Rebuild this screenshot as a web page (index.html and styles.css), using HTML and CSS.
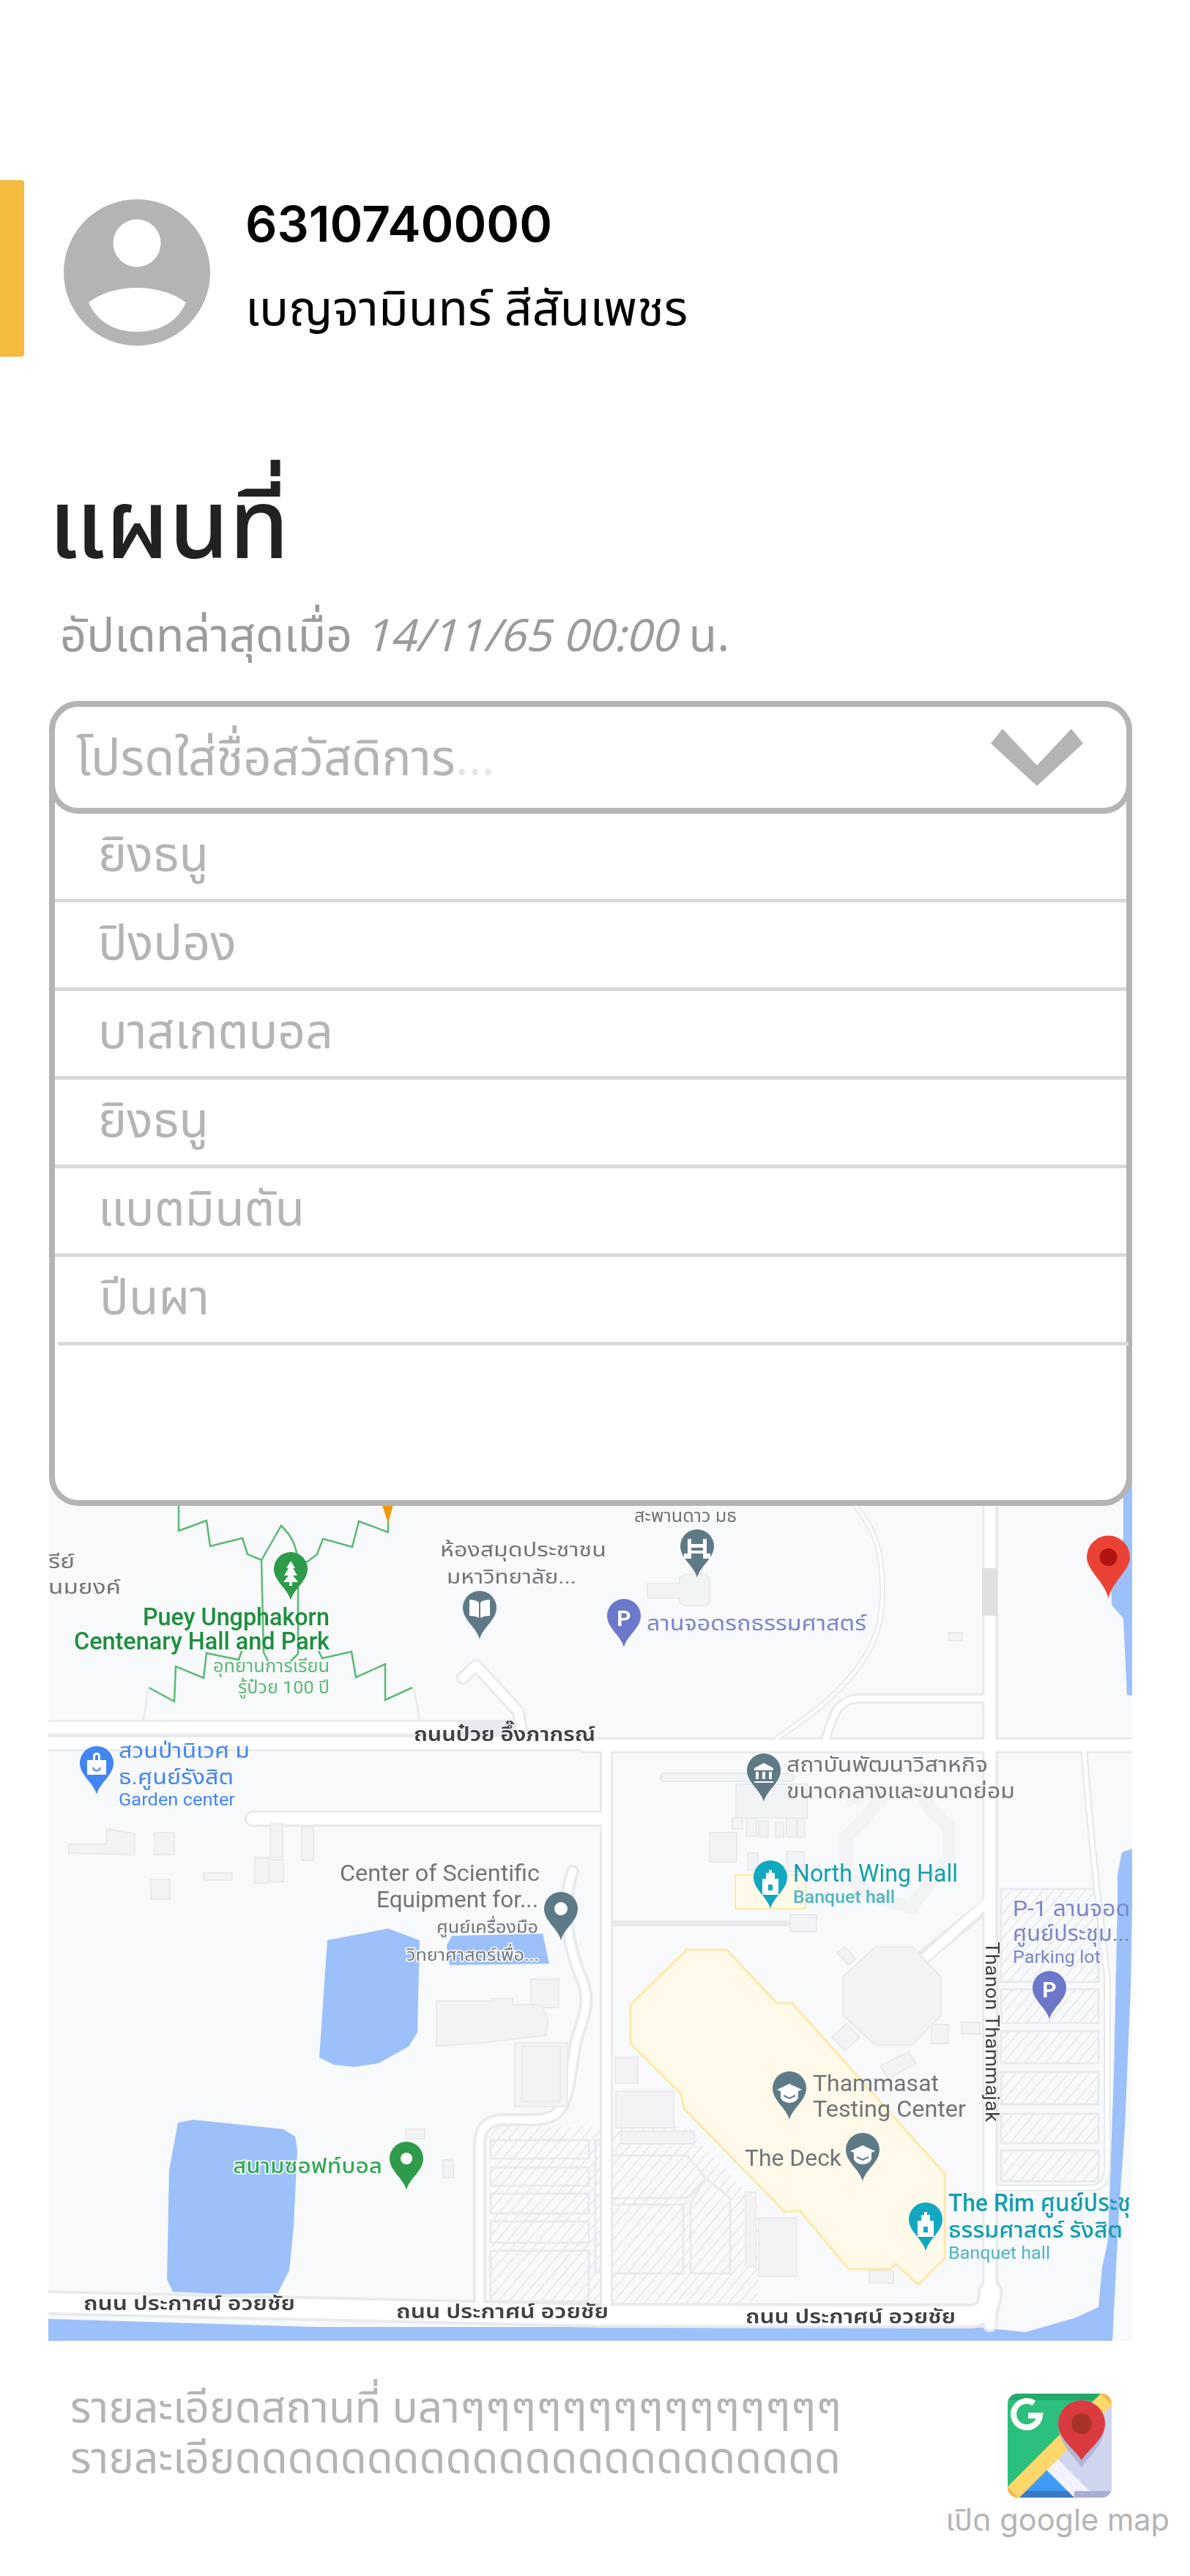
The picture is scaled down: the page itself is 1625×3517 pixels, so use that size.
FILE: index.html
```html
<!DOCTYPE html>
<html lang="th">
<head>
<meta charset="utf-8">
<title>แผนที่</title>
<link rel="stylesheet" href="styles.css">
</head>
<body>
<header class="user">
  <div class="user-bar"></div>
  <svg class="avatar" viewBox="0 0 200 200"><circle cx="100" cy="100" r="100" fill="#b4b4b4"/><circle cx="100" cy="60" r="32.5" fill="#fff"/><path d="M34 141C50 128 74 121 100 121C126 121 150 128 167 141C155 168 130 181 100 181C70 181 46 168 34 141Z" fill="#fff"/></svg>
  <div class="user-info">
    <div class="user-id">6310740000</div>
    <div class="user-name">เบญจามินทร์ สีสันเพชร</div>
  </div>
</header>
<h1 class="title">แผนที่</h1>
<p class="updated">อัปเดทล่าสุดเมื่อ <em>14/11/65 00:00</em> น.</p>
<section class="picker">
  <div class="panel">
    <div class="field">
      <span class="placeholder">โปรดใส่ชื่อสวัสดิการ<span class="dots">...</span></span>
      <svg class="chevron" viewBox="0 0 126 78"><path d="M0 20L16 0L63 50L110 0L126 20L63 78Z" fill="#b4b4b4"/></svg>
    </div>
    <ul class="options">
      <li>ยิงธนู</li>
      <li>ปิงปอง</li>
      <li>บาสเกตบอล</li>
      <li>ยิงธนู</li>
      <li>แบตมินตัน</li>
      <li class="last">ปีนผา</li>
    </ul>
  </div>
</section>
<div class="map">
<svg class="map-svg" viewBox="66 2000 1480 1197" font-family="Roboto, 'Noto Sans Thai', 'Noto Sans', sans-serif">
  <defs>
    <path id="pin" d="M0 66C-4 50 -23 40 -23 23A23 23 0 1 1 23 23C23 40 4 50 0 66Z"/>
    <pattern id="hatch" width="11" height="11" patternUnits="userSpaceOnUse" patternTransform="rotate(40)"><rect width="11" height="11" fill="#f8f9fa"/><rect width="1.4" height="11" fill="#e3e5e8"/></pattern>
  </defs>
  <rect x="66" y="2000" width="1480" height="1197" fill="#f8f9fa"/>

  <g fill="#9cc0f9">
    <path d="M1534 2000H1546V2316L1539 2315L1534 2211L1518 2192L1517 2154L1534 2100Z"/>
    <path d="M1546 2525L1532 2530L1526 2560L1526 2600L1521 2830L1513 3060L1505 3097L1500 3151L1467 3166L1400 3185L1333 3178L433 3178L66 3167V3197H1519L1528 3021L1536 2906L1544 2715L1546 2600Z"/>
    <path d="M447 2650L530 2634L573 2650L570 2776L558 2795L517 2818L484 2823L456 2820L436 2810Z"/>
    <path d="M617 2644L741 2641L750 2682L614 2684L610 2657Z"/>
    <path d="M243 2899L264 2895L387 2908L403 2918L406 2937L401 3040L395 3101L379 3132L305 3133L236 3130L228 3113L231 2964Z"/>
  </g>

  <path d="M670 2905H935L1035 3010V3147H670Z" fill="url(#hatch)"/>
  <g fill="url(#hatch)" stroke="#e8eaed" stroke-width="3">
    <rect x="670" y="2923" width="134" height="25"/><rect x="670" y="2960" width="134" height="25"/><rect x="670" y="2996" width="134" height="27"/><rect x="670" y="3034" width="134" height="29"/><rect x="670" y="3074" width="134" height="69"/>
    <rect x="813" y="2923" width="15" height="180"/>
    <path d="M835 2944H938L964 2975L938 3002H835Z"/><path d="M835 3011H933V3105H835Z"/><path d="M943 3009L964 2975L997 3002V3105H943Z"/>
    <rect x="1367" y="2580" width="133" height="127"/><rect x="1367" y="2717" width="133" height="46"/><rect x="1367" y="2774" width="133" height="44"/><rect x="1367" y="2830" width="133" height="44"/><rect x="1367" y="2887" width="133" height="40"/><rect x="1367" y="2937" width="133" height="42"/>
  </g>

  <g fill="none" stroke-linecap="round" stroke-linejoin="round">
    <g stroke="#e8eaed">
      <path d="M66 2360H700M66 2381H800" stroke-width="22"/>
      <path d="M800 2384H1546" stroke-width="22"/>
      <path d="M632 2292L650 2275L708 2338L713 2372" stroke-width="18"/>
      <path d="M345 2484H826" stroke-width="22"/>
      <path d="M828 2384V3147" stroke-width="18"/>
      <path d="M1352 2000V3174" stroke-width="22"/>
      <path d="M1169 2058C1196 2090 1205 2120 1205 2173C1205 2230 1190 2290 1061 2374" stroke-width="8"/>
      <path d="M1128 2374C1138 2340 1145 2320 1175 2320H1345" stroke-width="14"/>
      <path d="M1480 2384C1488 2500 1500 2600 1512 2700V2960C1512 2984 1500 2988 1490 2988H1360" stroke-width="10"/>
      <path d="M1350 2600L1256 2677" stroke-width="20"/>
      <path d="M66 3145L820 3162L1325 3163C1340 3163 1352 3155 1352 3130" stroke-width="34"/>
      <path d="M782 2556C770 2590 770 2640 790 2692C808 2730 800 2745 786 2790C775 2860 775 2890 740 2894C700 2900 655 2880 655 2930V3147" stroke-width="18"/>
      <path d="M904 2428H1082M833 2627H1074" stroke-width="8"/>
    </g>
    <g stroke="#fff">
      <path d="M66 2360H620M66 2381H800" stroke-width="16"/>
      <path d="M800 2384H1546" stroke-width="16"/>
      <path d="M632 2292L650 2275L708 2338L713 2372" stroke-width="12"/>
      <path d="M345 2484H826" stroke-width="16"/>
      <path d="M828 2384V3147" stroke-width="12"/>
      <path d="M1352 2000V3174" stroke-width="15"/>
      <path d="M1169 2058C1196 2090 1205 2120 1205 2173C1205 2230 1190 2290 1061 2374" stroke-width="4"/>
      <path d="M1128 2374C1138 2340 1145 2320 1175 2320H1345" stroke-width="8"/>
      <path d="M1480 2384C1488 2500 1500 2600 1512 2700V2960C1512 2984 1500 2988 1490 2988H1360" stroke-width="5"/>
      <path d="M1346 2600L1260 2677" stroke-width="12"/>
      <path d="M66 3145L820 3162L1325 3163C1340 3163 1352 3155 1352 3130" stroke-width="26"/>
      <path d="M782 2556C770 2590 770 2640 790 2692C808 2730 800 2745 786 2790C775 2860 775 2890 740 2894C700 2900 655 2880 655 2930V3147" stroke-width="10"/>
    </g>
  </g>
  <rect x="1341" y="2142" width="21" height="65" fill="#e0e0e0"/>

  <g fill="#f1f3f4" stroke="#e8eaed" stroke-width="2">
    <path d="M94 2519H145V2498L184 2504V2533L94 2531Z"/>
    <rect x="211" y="2503" width="27" height="30"/><rect x="206" y="2567" width="26" height="27"/><rect x="278" y="2558" width="39" height="10"/>
    <rect x="348" y="2537" width="19" height="35"/><rect x="367" y="2540" width="20" height="30"/><rect x="369" y="2491" width="17" height="46"/><rect x="412" y="2495" width="16" height="46"/>
    <path d="M884 2163H928V2155L938 2150H964L969 2156V2190L964 2193H934L928 2190V2183H884Z"/>
    <rect x="1296" y="2230" width="18" height="11"/>
    <rect x="904" y="2422" width="178" height="11"/><path d="M1005 2437H1102V2483H1005Z"/>
    <rect x="1000" y="2483" width="14" height="15"/><rect x="1019" y="2483" width="14" height="25"/><rect x="1036" y="2487" width="13" height="22"/><rect x="1059" y="2489" width="11" height="20"/><rect x="1074" y="2483" width="13" height="26"/><rect x="1089" y="2483" width="10" height="26"/>
    <rect x="969" y="2503" width="37" height="40"/><rect x="1021" y="2531" width="14" height="23"/><rect x="1074" y="2529" width="24" height="27"/>
    <path d="M1155 2460L1190 2445L1205 2455L1180 2485L1155 2510V2560L1190 2590L1245 2605L1296 2535V2495L1270 2470L1255 2445L1230 2452" fill="none" stroke="#f1f3f4" stroke-width="18"/>
    <rect x="725" y="2703" width="38" height="39"/>
    <path d="M596 2733H670V2730H700V2738H740L749 2762L745 2780L700 2785L660 2790L596 2795Z"/>
    <rect x="703" y="2790" width="72" height="87"/><rect x="713" y="2795" width="52" height="75"/>
    <rect x="554" y="2908" width="26" height="13"/><rect x="605" y="2950" width="14" height="24"/>
    <rect x="1018" y="2994" width="14" height="102"/><rect x="1036" y="3029" width="52" height="80"/><rect x="1187" y="3101" width="33" height="17"/>
    <rect x="840" y="2810" width="31" height="35"/><rect x="841" y="2856" width="79" height="50"/><rect x="848" y="2911" width="100" height="17"/><rect x="1079" y="2615" width="36" height="23"/>
    <rect x="1313" y="2762" width="25" height="16"/><rect x="1272" y="2765" width="23" height="26"/>
    <path d="M1195 2659H1246L1285 2700V2753L1246 2793H1195L1151 2753V2700Z"/>
    <path d="M1202 2822L1241 2802L1250 2818L1213 2839Z"/><path d="M1136 2782L1156 2764L1174 2782L1154 2801Z"/><path d="M1143 2667L1154 2659L1168 2675L1159 2684Z"/>
  </g>

  <rect x="1004" y="2561" width="96" height="46" fill="#fef9e8" stroke="#fde8a8" stroke-width="2"/>
  <path d="M938 2663H992L1061 2736H1082L1290 2969V3084L1254 3120L1223 3092L1215 3099H1159L1092 3019L1072 3021L935 2881L930 2860L861 2791V2738Z" fill="#fef9e8" stroke="#fde8a8" stroke-width="3"/>

  <g fill="none" stroke="#5bb974" stroke-width="2.5">
    <path d="M244 2040V2091L282 2077L287 2112L331 2101L338 2123L357 2131L384 2084C398 2098 405 2110 407 2135L420 2133L433 2123L441 2102L481 2113L490 2078L530 2093V2040"/>
    <path d="M357 2131L360 2257L366 2269M407 2135V2259L397 2269"/>
    <path d="M203 2305L238 2324L240 2276L278 2292L282 2258L326 2267L330 2255M435 2255L440 2265L480 2256L486 2291L526 2273V2322L563 2305"/>
  </g>
  <path d="M203 2305L196 2349M565 2305L573 2349" fill="none" stroke="#e8eaed" stroke-width="2.5"/>
  <path d="M518 2045H540L530 2080Z" fill="#f29900"/>

  <g>
    <use href="#pin" x="397" y="2120" fill="#2e9b4a"/>
    <path d="M397 2132L391 2142H394L388 2152H394L387 2161H395V2166H399V2161H407L400 2152H406L400 2142H403Z" fill="#fff"/>
    <use href="#pin" x="655" y="2173" fill="#5f7a87"/>
    <path d="M641 2185C646 2185 651 2186 654 2189V2210C651 2208 646 2207 641 2207ZM669 2185C664 2185 659 2186 656 2189V2210C659 2208 664 2207 669 2207Z" fill="#fff"/>
    <use href="#pin" x="132" y="2385" fill="#4285f4"/>
    <path d="M119 2404H145V2424H119ZM127 2404V2399C127 2392 137 2392 137 2399V2404H134V2399C134 2396 130 2396 130 2399V2404Z" fill="#fff"/><path d="M127 2414C128 2420 136 2420 137 2414" fill="none" stroke="#4285f4" stroke-width="2"/>
    <use href="#pin" x="766" y="2584" fill="#5f7a87"/>
    <circle cx="766" cy="2607" r="9" fill="#fff"/>
    <use href="#pin" x="952" y="2089" fill="#5f7a87"/>
    <path d="M939 2102H944V2109H960V2102H965V2122H970V2129H960V2122H944V2129H934V2122H939ZM944 2114V2118H960V2114Z" fill="#fff" fill-rule="evenodd"/>
    <use href="#pin" x="852" y="2184" fill="#6c78c9"/>
    <use href="#pin" x="1043" y="2395" fill="#5f7a87"/>
    <path d="M1043 2408L1030 2415V2418H1056V2415ZM1032 2420H1036V2430H1032ZM1041 2420H1045V2430H1041ZM1050 2420H1054V2430H1050ZM1030 2433H1056V2435H1030Z" fill="#fff"/>
    <use href="#pin" x="1052" y="2541" fill="#12a8c0"/>
    <path d="M1050 2554H1054V2558H1058V2566H1063V2588H1041V2566H1046V2558H1050ZM1049 2574V2582H1055V2574Z" fill="#fff" fill-rule="evenodd"/>
    <use href="#pin" x="1433" y="2692" fill="#6c78c9"/>
    <use href="#pin" x="1078" y="2829" fill="#5f7a87"/>
    <path d="M1078 2846L1061 2854L1066 2856V2864C1066 2868 1072 2872 1078 2872C1084 2872 1090 2868 1090 2864V2856L1095 2854Z" fill="#fff"/><path d="M1070 2862L1078 2866L1086 2862" fill="none" stroke="#5f7a87" stroke-width="2"/>
    <use href="#pin" x="1178" y="2913" fill="#5f7a87"/>
    <path d="M1178 2930L1161 2938L1166 2940V2948C1166 2952 1172 2956 1178 2956C1184 2956 1190 2952 1190 2948V2940L1195 2938Z" fill="#fff"/><path d="M1170 2946L1178 2950L1186 2946" fill="none" stroke="#5f7a87" stroke-width="2"/>
    <use href="#pin" x="1264" y="3008" fill="#12a8c0"/>
    <path d="M1262 3021H1266V3025H1270V3033H1275V3055H1253V3033H1258V3025H1262ZM1261 3041V3049H1267V3041Z" fill="#fff" fill-rule="evenodd"/>
    <use href="#pin" x="555" y="2925" fill="#2e9b4a"/>
    <circle cx="555" cy="2948" r="8" fill="#fff"/>
    <path d="M1513.5 2183C1508 2160 1484 2145 1484 2127A29.5 29.5 0 1 1 1543 2127C1543 2145 1519 2160 1513.5 2183Z" fill="#ea4335"/>
    <circle cx="1513.5" cy="2127" r="12" fill="#b31412"/>
  </g>

  <g>
    <text x="852" y="2221" text-anchor="middle" font-size="30" font-weight="700" fill="#fff">P</text>
    <text x="1433" y="2728" text-anchor="middle" font-size="30" font-weight="700" fill="#fff">P</text>

    <text x="66" y="2142" font-size="27" class="grey" textLength="36" lengthAdjust="spacingAndGlyphs">รีย์</text>
    <text x="66" y="2177" font-size="27" class="grey" textLength="99" lengthAdjust="spacingAndGlyphs">นมยงค์</text>
    <text x="450" y="2220" text-anchor="end" font-size="33" font-weight="500" class="green" textLength="255" lengthAdjust="spacingAndGlyphs">Puey Ungphakorn</text>
    <text x="450" y="2253" text-anchor="end" font-size="33" font-weight="500" class="green" textLength="349" lengthAdjust="spacingAndGlyphs">Centenary Hall and Park</text>
    <text x="450" y="2284" text-anchor="end" font-size="24" class="green2" textLength="159" lengthAdjust="spacingAndGlyphs">อุทยานการเรียน</text>
    <text x="450" y="2313" text-anchor="end" font-size="24" class="green2" textLength="125" lengthAdjust="spacingAndGlyphs">รู้ป๋วย 100 ปี</text>
    <text x="601" y="2126" font-size="27" class="grey" textLength="227" lengthAdjust="spacingAndGlyphs">ห้องสมุดประชาชน</text>
    <text x="610" y="2163" font-size="27" class="grey" textLength="177" lengthAdjust="spacingAndGlyphs">มหาวิทยาลัย...</text>
    <text x="866" y="2079" font-size="24" class="grey" textLength="140" lengthAdjust="spacingAndGlyphs">สะพานดาว มธ</text>
    <text x="883" y="2227" font-size="29" class="purple" textLength="300" lengthAdjust="spacingAndGlyphs">ลานจอดรถธรรมศาสตร์</text>
    <text x="565" y="2378" font-size="27" font-weight="600" class="road" textLength="248" lengthAdjust="spacingAndGlyphs">ถนนป๋วย อึ๊งภากรณ์</text>
    <text x="162" y="2401" font-size="28" class="blue" textLength="179" lengthAdjust="spacingAndGlyphs">สวนป่านิเวศ ม</text>
    <text x="162" y="2437" font-size="28" class="blue" textLength="157" lengthAdjust="spacingAndGlyphs">ธ.ศูนย์รังสิต</text>
    <text x="162" y="2466" font-size="23" class="blue" textLength="159" lengthAdjust="spacingAndGlyphs">Garden center</text>
    <text x="1074" y="2420" font-size="28" class="grey" textLength="275" lengthAdjust="spacingAndGlyphs">สถาบันพัฒนาวิสาหกิจ</text>
    <text x="1074" y="2456" font-size="28" class="grey" textLength="312" lengthAdjust="spacingAndGlyphs">ขนาดกลางและขนาดย่อม</text>
    <text x="737" y="2569" text-anchor="end" font-size="31" class="grey" textLength="273" lengthAdjust="spacingAndGlyphs">Center of Scientific</text>
    <text x="735" y="2605" text-anchor="end" font-size="31" class="grey" textLength="221" lengthAdjust="spacingAndGlyphs">Equipment for...</text>
    <text x="596" y="2640" font-size="23" class="grey" textLength="139" lengthAdjust="spacingAndGlyphs">ศูนย์เครื่องมือ</text>
    <text x="555" y="2678" font-size="23" class="grey halo" textLength="181" lengthAdjust="spacingAndGlyphs">วิทยาศาสตร์เพื่อ...</text>
    <text x="1083" y="2570" font-size="33" class="teal" textLength="225" lengthAdjust="spacingAndGlyphs">North Wing Hall</text>
    <text x="1083" y="2599" font-size="24" font-weight="500" class="teal2" textLength="139" lengthAdjust="spacingAndGlyphs">Banquet hall</text>
    <text x="1383" y="2617" font-size="30" class="purple" textLength="160" lengthAdjust="spacingAndGlyphs">P-1 ลานจอด</text>
    <text x="1383" y="2651" font-size="30" class="purple" textLength="160" lengthAdjust="spacingAndGlyphs">ศูนย์ประชุม...</text>
    <text x="1383" y="2681" font-size="24" class="purple" textLength="120" lengthAdjust="spacingAndGlyphs">Parking lot</text>
    <text x="1110" y="2856" font-size="31" class="grey" textLength="172" lengthAdjust="spacingAndGlyphs">Thammasat</text>
    <text x="1110" y="2891" font-size="31" class="grey" textLength="209" lengthAdjust="spacingAndGlyphs">Testing Center</text>
    <text x="1017" y="2958" font-size="31" class="grey" textLength="132" lengthAdjust="spacingAndGlyphs">The Deck</text>
    <text x="1295" y="3020" font-size="33" font-weight="500" class="teal" textLength="249" lengthAdjust="spacingAndGlyphs">The Rim ศูนย์ประชุ</text>
    <text x="1295" y="3056" font-size="31" font-weight="500" class="teal" textLength="238" lengthAdjust="spacingAndGlyphs">ธรรมศาสตร์ รังสิต</text>
    <text x="1295" y="3085" font-size="24" class="teal2" textLength="139" lengthAdjust="spacingAndGlyphs">Banquet hall</text>
    <text x="318" y="2968" font-size="29" font-weight="500" class="green3 halo" textLength="204" lengthAdjust="spacingAndGlyphs">สนามซอฟท์บอล</text>
    <text transform="translate(1346 2652) rotate(90)" font-size="25" class="road" textLength="246" lengthAdjust="spacingAndGlyphs">Thanon Thammajak</text>
    <text x="114" y="3155" font-size="27" font-weight="600" class="road" textLength="289" lengthAdjust="spacingAndGlyphs">ถนน ประกาศน์ อวยชัย</text>
    <text x="541" y="3166" font-size="27" font-weight="600" class="road" textLength="290" lengthAdjust="spacingAndGlyphs">ถนน ประกาศน์ อวยชัย</text>
    <text x="1018" y="3173" font-size="27" font-weight="600" class="road" textLength="287" lengthAdjust="spacingAndGlyphs">ถนน ประกาศน์ อวยชัย</text>
  </g>
</svg>
</div>
<footer class="foot">
  <div class="foot-text">
    <p>รายละเอียดสถานที่ บลาๆๆๆๆๆๆๆๆๆๆๆๆๆๆๆ</p>
    <p>รายละเอียดดดดดดดดดดดดดดดดดดดดดดด</p>
  </div>
  <div class="foot-link">
    <svg class="gmap" viewBox="0 0 142 142">
      <defs><clipPath id="logo-clip"><rect width="142" height="142" rx="14"/></clipPath></defs>
      <g clip-path="url(#logo-clip)">
        <rect width="142" height="142" fill="#2bbf7c"/>
        <rect width="142" height="9" fill="#22a869"/>
        <path d="M142 0V142H0Z" fill="#cfd4ef"/>
        <path d="M15 142L53 104L91 142Z" fill="#3f9bf5"/>
        <rect x="15" y="133" width="76" height="9" fill="#3b78c6"/>
        <path d="M53 104L68 89L121 142H91Z" fill="#f1f2fb"/>
        <rect x="91" y="133" width="51" height="9" fill="#a9aed6"/>
        <path d="M0 127L127 0H142V16L16 142H0Z" fill="#ffd76a"/>
        <path d="M0 127L15 142H0ZM127 0H142V15Z" fill="#f8b64c"/>
      </g>
      <path d="M36 13A18 18 0 1 0 44 30H28" fill="none" stroke="#fff" stroke-width="8"/>
      <path d="M101 101C92 86 69 70 69 41A32 32 0 0 1 133 41C133 70 110 86 101 101Z" fill="#aeb3d6" opacity=".9"/>
      <path d="M101 91C92 76 69 62 69 41A32 32 0 0 1 133 41C133 62 110 76 101 91Z" fill="#d93b3e"/>
      <circle cx="101" cy="41" r="14" fill="#a93226"/>
    </svg>
    <span class="gmap-label">เปิด google map</span>
  </div>
</footer>
</body>
</html>
```
FILE: styles.css
```css
* { box-sizing: border-box; }
html, body { margin: 0; padding: 0; background: #fff; }
body { width: 1625px; height: 3517px; overflow: hidden; font-family: "Noto Sans Thai", "Noto Sans", "Liberation Sans", sans-serif; color: #222; }

.user { display: flex; padding-top: 246px; height: 487px; }
.user-bar { width: 33px; height: 241px; background: #f4bb3f; border-radius: 0 4px 4px 0; }
.avatar { width: 200px; height: 200px; margin: 26px 0 0 54px; flex: none; }
.user-info { margin-left: 48px; }
.user-id { font-family: Inter, "Liberation Sans", sans-serif; font-size: 68px; font-weight: 600; line-height: 80px; color: #000; margin-top: 19px; }
.user-name { font-size: 66.5px; line-height: 90px; color: #000; margin-top: 34px; white-space: nowrap; }

.title { margin: 150px 0 0 66px; font-size: 132px; line-height: 170px; font-weight: 500; color: #222; }
.updated { margin: 23px 0 0 82px; font-size: 63px; line-height: 80px; color: #9b9b9f; white-space: nowrap; }
.updated em { font-style: italic; font-size: 61px; }

.picker { position: relative; z-index: 1; height: 1042px; margin-top: 47px; }
.panel { position: absolute; left: 67px; top: 0; width: 1479px; height: 1099px; background: #fff; border: 8px solid #b4b4b4; border-radius: 40px; }
.field { position: relative; margin: -8px -8px 0; height: 154px; border: 8px solid #b4b4b4; border-radius: 40px; background: #fff; padding: 7px 0 0 29px; display: flex; align-items: center; font-size: 67px; color: #b4b4b4; }
.placeholder { white-space: nowrap; }
.dots { color: #e6e6e6; }
.chevron { position: absolute; right: 59px; top: 30px; width: 126px; height: 78px; }
.options { list-style: none; margin: 0; padding: 0; }
.options li { height: 121px; padding-left: 59px; border-bottom: 5px solid #d9d9d9; font-size: 66px; line-height: 116px; color: #b4b4b4; }
.options li.last { margin: 0 -3px 0 4px; padding-left: 57px; }

.map { margin-left: 66px; width: 1480px; height: 1197px; overflow: hidden; }
.map-svg { display: block; width: 1480px; height: 1197px; filter: blur(.5px); }
.grey { fill: #70757a; }
.green { fill: #1e8e3e; }
.green2 { fill: #5bb974; }
.green3 { fill: #34a853; }
.purple { fill: #7986cb; }
.blue { fill: #4285f4; }
.teal { fill: #129eaf; }
.teal2 { fill: #4db6c4; }
.road { fill: #3c4043; }
.halo { stroke: #fff; stroke-width: 3px; paint-order: stroke; }

.foot { display: flex; justify-content: space-between; padding: 59px 28px 0 96px; }
.foot-text p { margin: 0; font-size: 58.4px; line-height: 69px; color: #b4b4b4; white-space: nowrap; }
.foot-link { display: flex; flex-direction: column; align-items: center; margin-top: 13px; }
.gmap { width: 142px; height: 142px; margin-left: 6px; }
.gmap-label { font-family: Inter, "Noto Sans Thai", sans-serif; font-size: 41.5px; line-height: 60px; color: #b4b4b4; white-space: nowrap; }
```
